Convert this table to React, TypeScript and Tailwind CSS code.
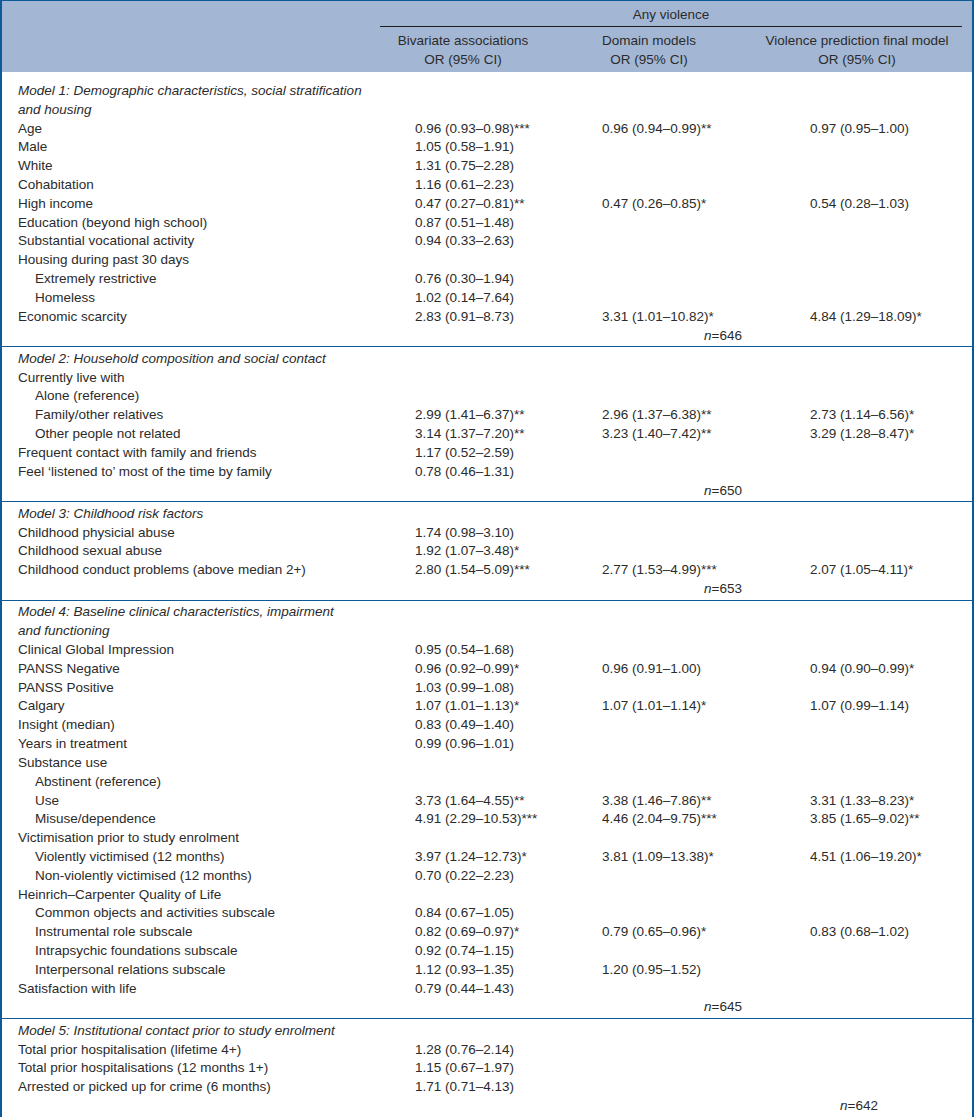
type Row = {
  label?: string;
  title?: boolean;
  indent?: boolean;
  c1?: string;
  c2?: string;
  c3?: string;
  n?: { col: 2 | 3; value: string };
};

const SECTIONS: Row[][] = [
  [
    { label: "Model 1: Demographic characteristics, social stratification", title: true },
    { label: "and housing", title: true },
    { label: "Age", c1: "0.96 (0.93–0.98)***", c2: "0.96 (0.94–0.99)**", c3: "0.97 (0.95–1.00)" },
    { label: "Male", c1: "1.05 (0.58–1.91)" },
    { label: "White", c1: "1.31 (0.75–2.28)" },
    { label: "Cohabitation", c1: "1.16 (0.61–2.23)" },
    { label: "High income", c1: "0.47 (0.27–0.81)**", c2: "0.47 (0.26–0.85)*", c3: "0.54 (0.28–1.03)" },
    { label: "Education (beyond high school)", c1: "0.87 (0.51–1.48)" },
    { label: "Substantial vocational activity", c1: "0.94 (0.33–2.63)" },
    { label: "Housing during past 30 days" },
    { label: "Extremely restrictive", indent: true, c1: "0.76 (0.30–1.94)" },
    { label: "Homeless", indent: true, c1: "1.02 (0.14–7.64)" },
    { label: "Economic scarcity", c1: "2.83 (0.91–8.73)", c2: "3.31 (1.01–10.82)*", c3: "4.84 (1.29–18.09)*" },
    { n: { col: 2, value: "646" } },
  ],
  [
    { label: "Model 2: Household composition and social contact", title: true },
    { label: "Currently live with" },
    { label: "Alone (reference)", indent: true },
    { label: "Family/other relatives", indent: true, c1: "2.99 (1.41–6.37)**", c2: "2.96 (1.37–6.38)**", c3: "2.73 (1.14–6.56)*" },
    { label: "Other people not related", indent: true, c1: "3.14 (1.37–7.20)**", c2: "3.23 (1.40–7.42)**", c3: "3.29 (1.28–8.47)*" },
    { label: "Frequent contact with family and friends", c1: "1.17 (0.52–2.59)" },
    { label: "Feel ‘listened to’ most of the time by family", c1: "0.78 (0.46–1.31)" },
    { n: { col: 2, value: "650" } },
  ],
  [
    { label: "Model 3: Childhood risk factors", title: true },
    { label: "Childhood physicial abuse", c1: "1.74 (0.98–3.10)" },
    { label: "Childhood sexual abuse", c1: "1.92 (1.07–3.48)*" },
    { label: "Childhood conduct problems (above median 2+)", c1: "2.80 (1.54–5.09)***", c2: "2.77 (1.53–4.99)***", c3: "2.07 (1.05–4.11)*" },
    { n: { col: 2, value: "653" } },
  ],
  [
    { label: "Model 4: Baseline clinical characteristics, impairment", title: true },
    { label: "and functioning", title: true },
    { label: "Clinical Global Impression", c1: "0.95 (0.54–1.68)" },
    { label: "PANSS Negative", c1: "0.96 (0.92–0.99)*", c2: "0.96 (0.91–1.00)", c3: "0.94 (0.90–0.99)*" },
    { label: "PANSS Positive", c1: "1.03 (0.99–1.08)" },
    { label: "Calgary", c1: "1.07 (1.01–1.13)*", c2: "1.07 (1.01–1.14)*", c3: "1.07 (0.99–1.14)" },
    { label: "Insight (median)", c1: "0.83 (0.49–1.40)" },
    { label: "Years in treatment", c1: "0.99 (0.96–1.01)" },
    { label: "Substance use" },
    { label: "Abstinent (reference)", indent: true },
    { label: "Use", indent: true, c1: "3.73 (1.64–4.55)**", c2: "3.38 (1.46–7.86)**", c3: "3.31 (1.33–8.23)*" },
    { label: "Misuse/dependence", indent: true, c1: "4.91 (2.29–10.53)***", c2: "4.46 (2.04–9.75)***", c3: "3.85 (1.65–9.02)**" },
    { label: "Victimisation prior to study enrolment" },
    { label: "Violently victimised (12 months)", indent: true, c1: "3.97 (1.24–12.73)*", c2: "3.81 (1.09–13.38)*", c3: "4.51 (1.06–19.20)*" },
    { label: "Non-violently victimised (12 months)", indent: true, c1: "0.70 (0.22–2.23)" },
    { label: "Heinrich–Carpenter Quality of Life" },
    { label: "Common objects and activities subscale", indent: true, c1: "0.84 (0.67–1.05)" },
    { label: "Instrumental role subscale", indent: true, c1: "0.82 (0.69–0.97)*", c2: "0.79 (0.65–0.96)*", c3: "0.83 (0.68–1.02)" },
    { label: "Intrapsychic foundations subscale", indent: true, c1: "0.92 (0.74–1.15)" },
    { label: "Interpersonal relations subscale", indent: true, c1: "1.12 (0.93–1.35)", c2: "1.20 (0.95–1.52)" },
    { label: "Satisfaction with life", c1: "0.79 (0.44–1.43)" },
    { n: { col: 2, value: "645" } },
  ],
  [
    { label: "Model 5: Institutional contact prior to study enrolment", title: true },
    { label: "Total prior hospitalisation (lifetime 4+)", c1: "1.28 (0.76–2.14)" },
    { label: "Total prior hospitalisations (12 months 1+)", c1: "1.15 (0.67–1.97)" },
    { label: "Arrested or picked up for crime (6 months)", c1: "1.71 (0.71–4.13)" },
    { n: { col: 3, value: "642" } },
  ],
];

const GRID = "grid grid-cols-[378px_166px_206px_210px]";

function NValue({ value }: { value: string }) {
  return (
    <>
      <span className="italic">n</span>={value}
    </>
  );
}

function TableRow({ row }: { row: Row }) {
  if (row.n) {
    return (
      <div className={GRID}>
        <div />
        <div />
        <div className="whitespace-nowrap pl-[158px]">{row.n.col === 2 ? <NValue value={row.n.value} /> : null}</div>
        <div className="whitespace-nowrap pl-[88px]">{row.n.col === 3 ? <NValue value={row.n.value} /> : null}</div>
      </div>
    );
  }
  return (
    <div className={GRID}>
      <div className={`whitespace-nowrap ${row.indent ? "pl-[33px]" : "pl-4"} ${row.title ? "italic" : ""}`}>
        {row.label}
      </div>
      <div className="whitespace-nowrap pl-[35px]">{row.c1}</div>
      <div className="whitespace-nowrap pl-[56px]">{row.c2}</div>
      <div className="whitespace-nowrap pl-[58px]">{row.c3}</div>
    </div>
  );
}

export default function App() {
  return (
    <div className="min-h-screen bg-white">
      <div
        className="w-[974px] border-x-2 border-t border-[#0d5a98] text-[13.5px] leading-[18.82px] text-[#2b2b2b]"
        style={{ fontFamily: '"Liberation Sans", Arial, sans-serif' }}
      >
        {/* Header */}
        <div className="bg-[#a3b7d5] pr-[10px]">
          <div className={GRID}>
            <div />
            <div className="col-span-3 border-b-[1.5px] border-[#1e1e1e] pt-[4.5px] pb-[2px] text-center">
              Any violence
            </div>
          </div>
          <div className={`${GRID} pt-[5px] pb-[2.5px] text-center`}>
            <div />
            <div>
              Bivariate associations
              <br />
              OR (95% CI)
            </div>
            <div>
              Domain models
              <br />
              OR (95% CI)
            </div>
            <div>
              Violence prediction final model
              <br />
              OR (95% CI)
            </div>
          </div>
        </div>

        {SECTIONS.map((rows, i) => (
          <div
            key={i}
            className={i === 0 ? "pt-[9.5px] pb-[1px]" : "border-t-[1.5px] border-[#0d5a98] pt-[2.5px] pb-[1px]"}
          >
            {rows.map((row, j) => (
              <TableRow key={j} row={row} />
            ))}
          </div>
        ))}
      </div>
    </div>
  );
}
